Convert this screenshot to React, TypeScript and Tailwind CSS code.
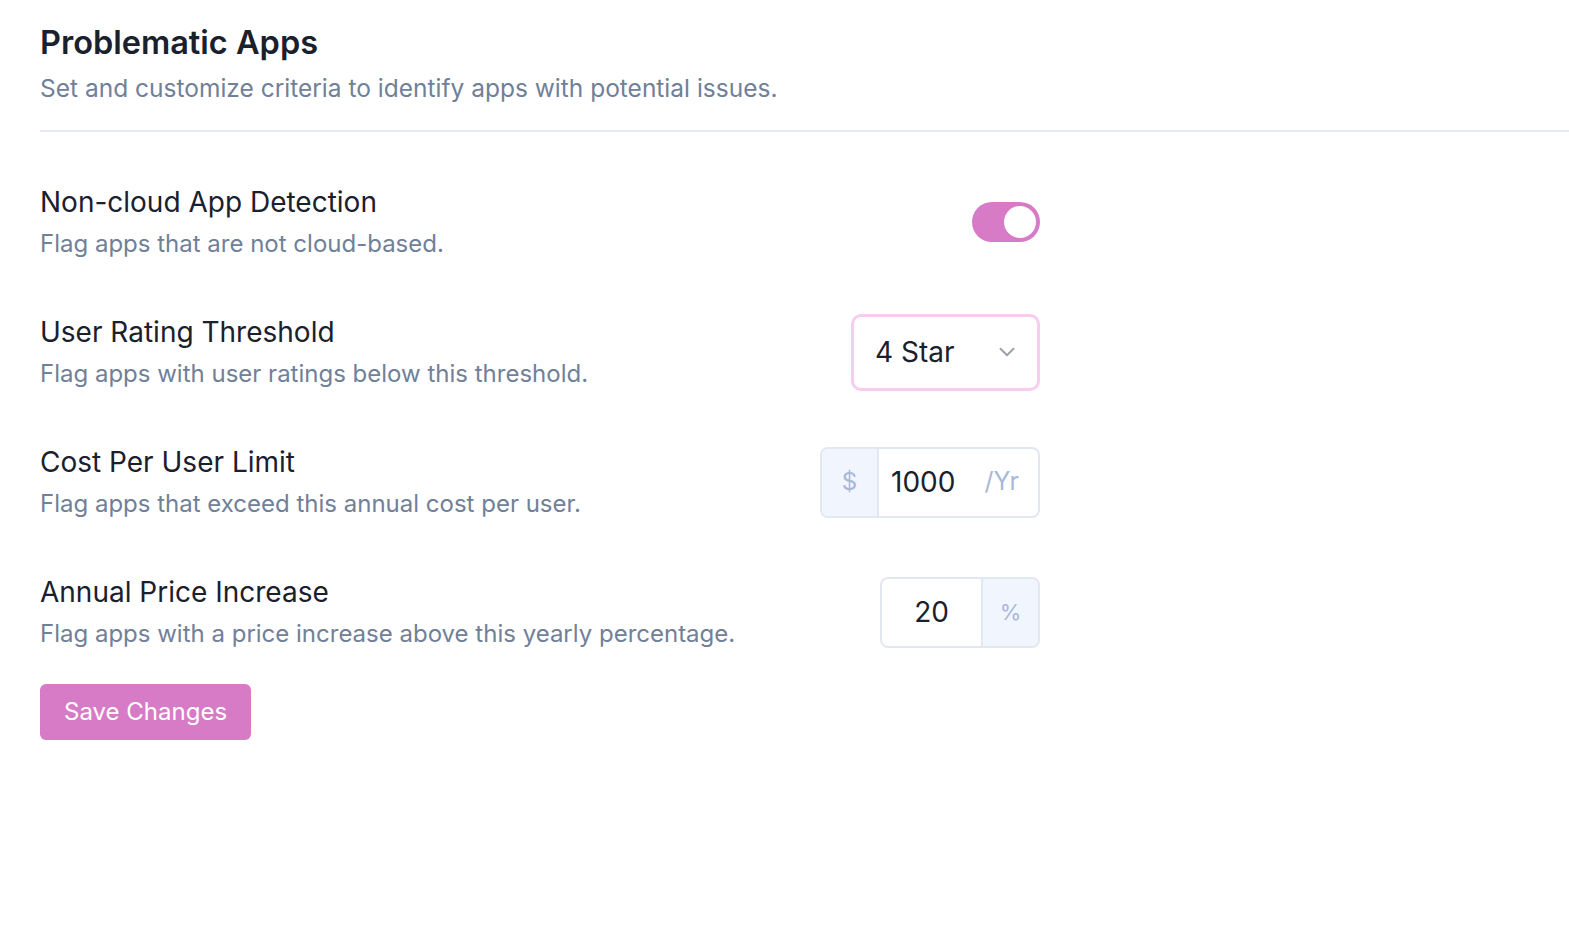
import { ChevronDown } from "lucide-react";

const font = "font-['Inter',_'Noto_Sans',_sans-serif]";

function Row({ title, desc, children }: { title: string; desc: string; children: React.ReactNode }) {
  return (
    <div className="flex items-center justify-between h-[130px]">
      <div>
        <h3 className="text-[28px] leading-[36px] text-[#1a202c]">{title}</h3>
        <p className="mt-[8px] text-[24px] leading-[32px] text-[#718099]">{desc}</p>
      </div>
      {children}
    </div>
  );
}

export default function App() {
  return (
    <div className={`${font} bg-white min-h-screen pl-[40px] pt-[23px]`}>
      <h1 className="text-[32.5px] leading-[40px] font-semibold text-[#1a202c]">Problematic Apps</h1>
      <p className="mt-[9px] text-[24.5px] leading-[32px] text-[#718099]">
        Set and customize criteria to identify apps with potential issues.
      </p>
      <div className="mt-[26px] h-[2px] bg-[#e2e9f5]" />

      <div className="w-[1000px] pt-[25px]">
        <Row title="Non-cloud App Detection" desc="Flag apps that are not cloud-based.">
          <button className="w-[68px] h-[40px] rounded-full bg-[#d77bc7] flex items-center justify-end px-[4px]">
            <span className="w-[32px] h-[32px] rounded-full bg-white" />
          </button>
        </Row>

        <Row title="User Rating Threshold" desc="Flag apps with user ratings below this threshold.">
          <div className="w-[189px] h-[77px] rounded-[10px] border-[3px] border-[#f7cdef] flex items-center justify-between pl-[21px] pr-[17px]">
            <span className="text-[28px] text-[#1a202c]">4 Star</span>
            <ChevronDown size={26} strokeWidth={1.9} className="text-[#9ca3af]" />
          </div>
        </Row>

        <Row title="Cost Per User Limit" desc="Flag apps that exceed this annual cost per user.">
          <div className="w-[220px] h-[71px] rounded-[8px] border-2 border-[#e2e8f0] flex overflow-hidden">
            <div className="w-[57px] bg-[#f1f5fe] border-r-2 border-[#e2e8f0] flex items-center justify-center text-[24px] text-[#a8b8d8]">
              $
            </div>
            <div className="flex-1 flex items-center justify-between pl-[12px] pr-[19px]">
              <span className="text-[28px] text-[#1a202c]">1000</span>
              <span className="text-[25px] text-[#a8b8d8]">/Yr</span>
            </div>
          </div>
        </Row>

        <Row title="Annual Price Increase" desc="Flag apps with a price increase above this yearly percentage.">
          <div className="w-[160px] h-[71px] rounded-[8px] border-2 border-[#e2e8f0] flex overflow-hidden">
            <div className="w-[99px] flex items-center justify-center text-[28px] text-[#1a202c]">20</div>
            <div className="flex-1 bg-[#f1f5fe] border-l-2 border-[#e2e8f0] flex items-center justify-center text-[22px] text-[#a8b8d8]">
              %
            </div>
          </div>
        </Row>
      </div>

      <button className="mt-[7px] h-[56px] px-[24px] rounded-[6px] bg-[#d77bc7] text-white text-[24px]">
        Save Changes
      </button>
    </div>
  );
}
